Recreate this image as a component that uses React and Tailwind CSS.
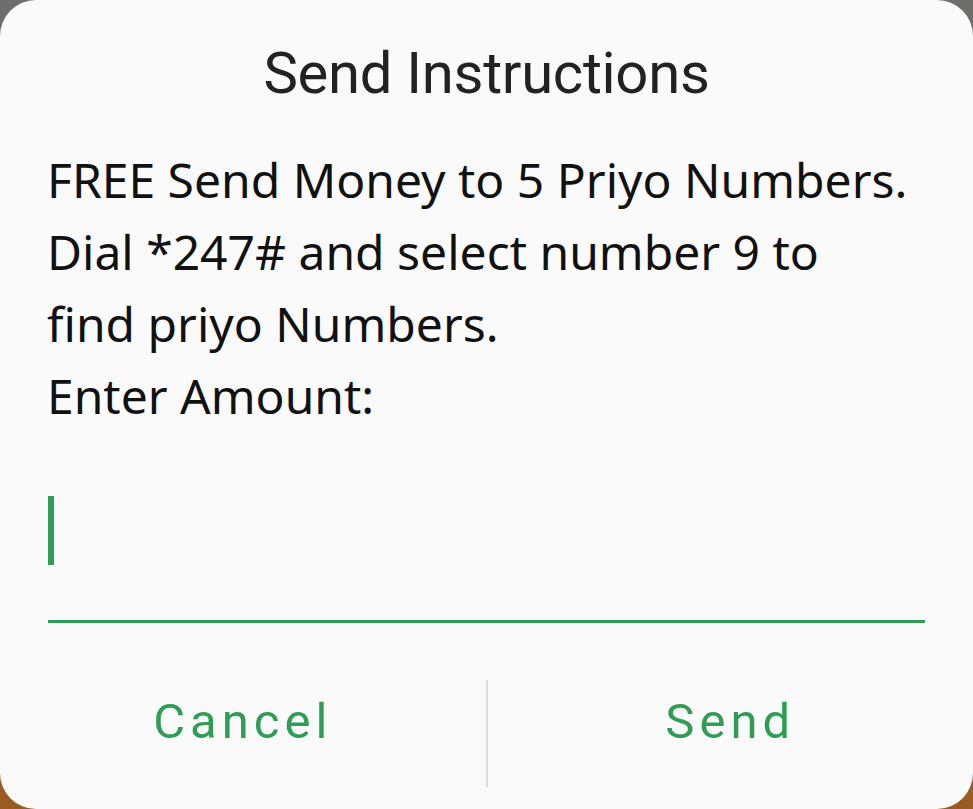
import React from "react";

const bodyFont = { fontFamily: "'Noto Sans', 'Open Sans', sans-serif" };

export default function App() {
  return (
    <div className="w-[973px] h-[809px] overflow-hidden bg-gradient-to-b from-[#6e6e6e] via-[#7a6a5a] to-[#9a5a20]">
      <div className="w-[973px] h-[809px] bg-[#fbfafb] rounded-[36px] flex flex-col">
        <h1 className="mt-[38px] text-center text-[58px] leading-[70px] text-[#222] font-['Roboto',sans-serif] tracking-[-0.3px]">
          Send Instructions
        </h1>

        <div
          className="mt-[36px] px-[47px] text-[48px] leading-[72px] text-[#111]"
          style={bodyFont}
        >
          <p>FREE Send Money to 5 Priyo Numbers.</p>
          <p>Dial *247# and select number 9 to</p>
          <p>find priyo Numbers.</p>
          <p>Enter Amount:</p>
        </div>

        <div className="mx-[48px] mt-[49px] h-[142px] border-b-[3px] border-[#2f9d55] flex items-start">
          <div className="mt-[15px] w-[6px] h-[69px] bg-[#2f9d55]" />
        </div>

        <div className="mt-[57px] flex h-[107px]">
          <button className="flex-1 pt-[14px] self-start text-center text-[49px] leading-[56px] tracking-[5px] text-[#2f9d55] font-['Roboto',sans-serif]">
            Cancel
          </button>
          <div className="w-[2px] bg-[#dcdcdc]" />
          <button className="flex-1 pt-[14px] self-start text-center text-[49px] leading-[56px] tracking-[5px] text-[#2f9d55] font-['Roboto',sans-serif]">
            Send
          </button>
        </div>
      </div>
    </div>
  );
}
